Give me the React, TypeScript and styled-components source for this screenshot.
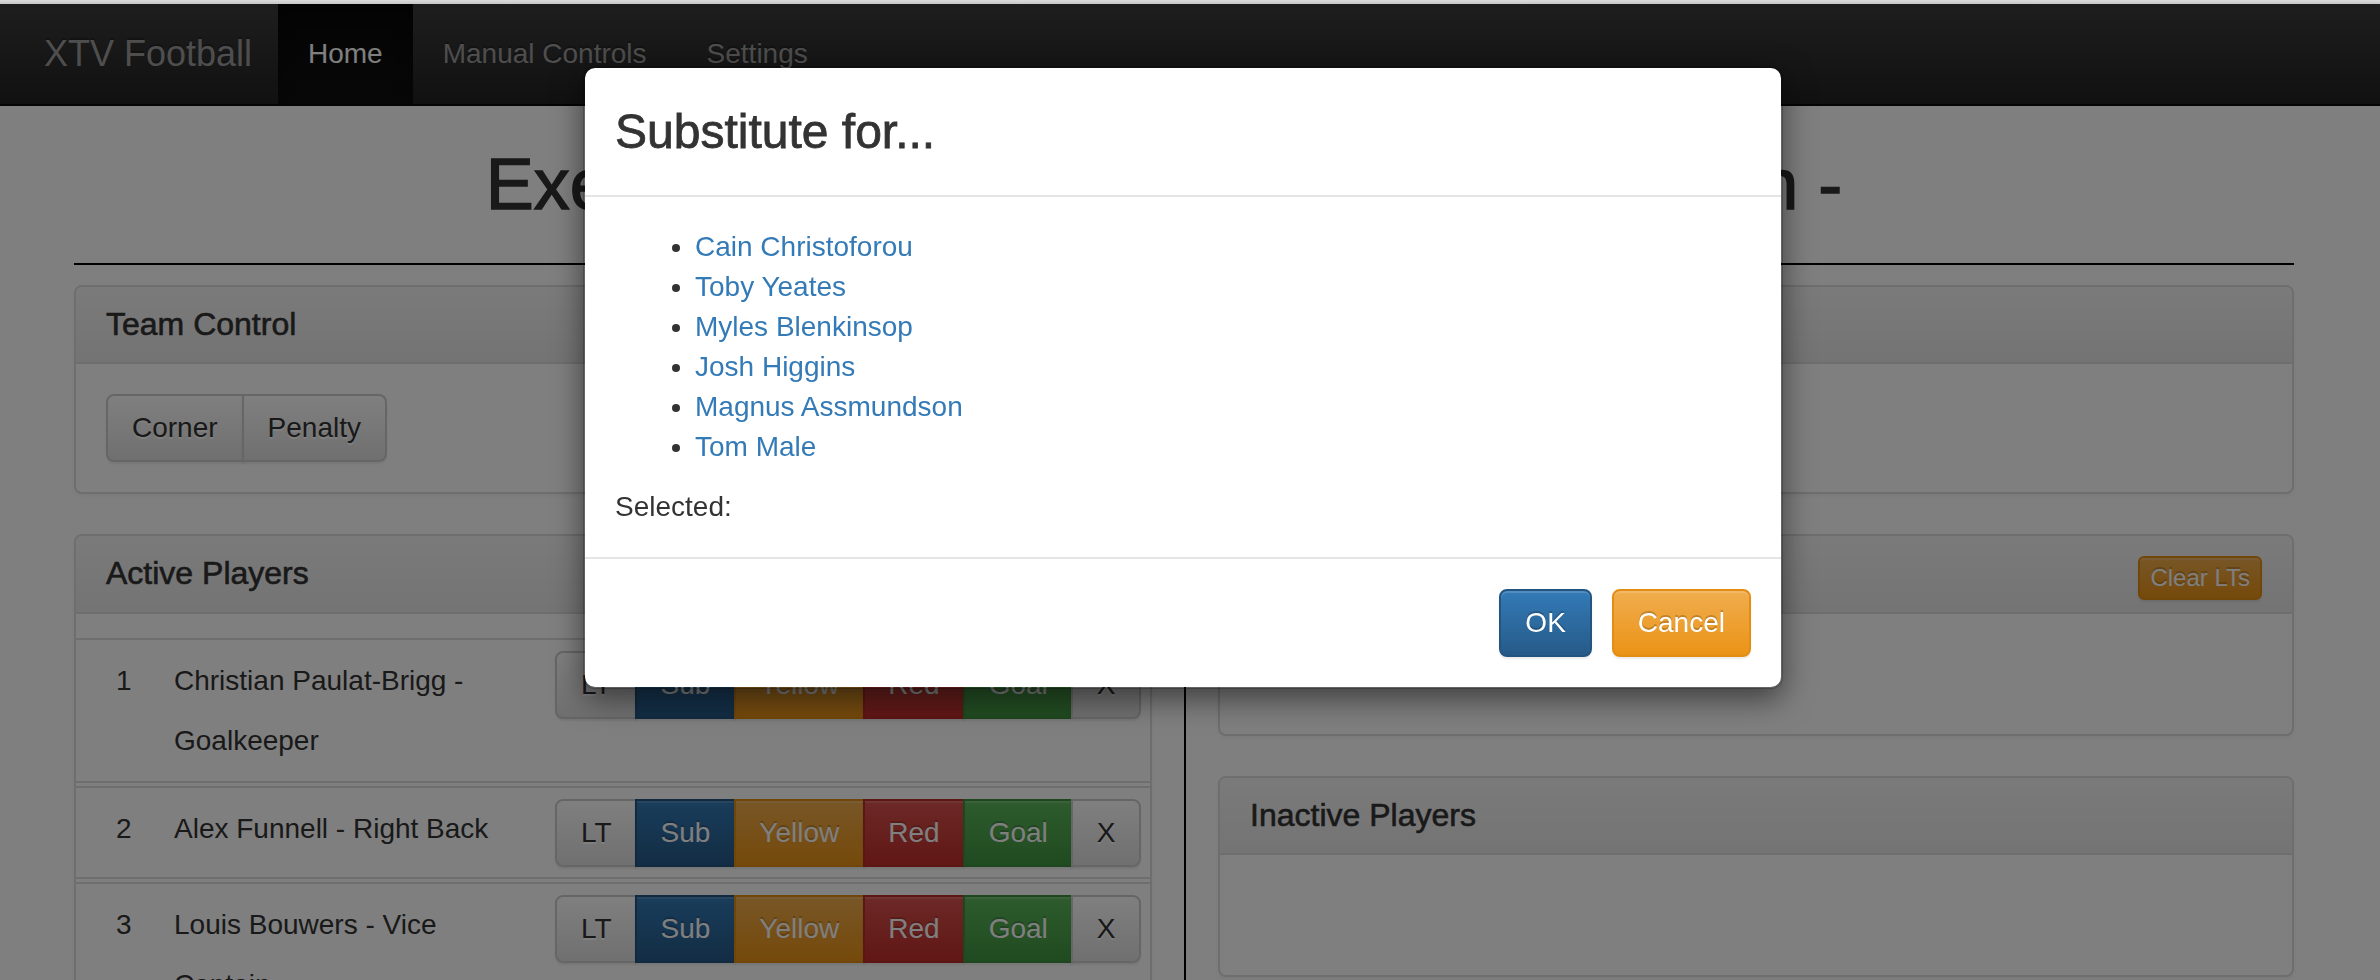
import React from "react";
import styled, { createGlobalStyle, css } from "styled-components";

const GlobalStyle = createGlobalStyle`
  html, body { margin: 0; padding: 0; overflow: hidden; background: #fff; }
  body {
    font-family: "Liberation Sans", Arial, Helvetica, sans-serif;
    font-size: 28px;
    line-height: 40px;
    color: #333;
  }
  * { box-sizing: border-box; }
`;

type Variant = "default" | "primary" | "success" | "warning" | "danger";

const variants: Record<Variant, { from: string; to: string; border: string; color: string; shadow: string }> = {
  default: { from: "#ffffff", to: "#e0e0e0", border: "#cccccc", color: "#333", shadow: "0 2px 0 #fff" },
  primary: { from: "#337ab7", to: "#265a88", border: "#245580", color: "#fff", shadow: "0 -2px 0 rgba(0,0,0,.2)" },
  success: { from: "#5cb85c", to: "#419641", border: "#3e8f3e", color: "#fff", shadow: "0 -2px 0 rgba(0,0,0,.2)" },
  warning: { from: "#f0ad4e", to: "#eb9316", border: "#e38d13", color: "#fff", shadow: "0 -2px 0 rgba(0,0,0,.2)" },
  danger: { from: "#d9534f", to: "#c12e2a", border: "#b92c28", color: "#fff", shadow: "0 -2px 0 rgba(0,0,0,.2)" },
};

const TopBand = styled.div`
  height: 4px;
  background: linear-gradient(to bottom, #dcdcdc, #c6c6c6);
`;

const Navbar = styled.nav`
  display: flex;
  align-items: stretch;
  height: 102px;
  background: linear-gradient(to bottom, #3c3c3c 0%, #222 100%);
  border-bottom: 2px solid #080808;
`;

const Brand = styled.a`
  display: flex;
  align-items: center;
  width: 278px;
  padding-left: 44px;
  font-size: 36px;
  color: #9d9d9d;
  text-shadow: 0 -2px 0 rgba(0, 0, 0, 0.25);
`;

const NavList = styled.div`
  display: flex;
  align-items: stretch;
`;

const NavLink = styled.a<{ $active?: boolean }>`
  display: flex;
  align-items: center;
  padding: 0 30px;
  font-size: 28px;
  color: ${(p) => (p.$active ? "#fff" : "#9d9d9d")};
  text-shadow: 0 -2px 0 rgba(0, 0, 0, 0.25);
  ${(p) =>
    p.$active &&
    css`
      background: linear-gradient(to bottom, #080808 0%, #0f0f0f 100%);
      box-shadow: inset 0 6px 18px rgba(0, 0, 0, 0.25);
    `}
`;

const Page = styled.main`
  padding: 0 86px 0 74px;
`;

const Title = styled.h1`
  margin: 39px 0 0;
  padding-right: 40px;
  text-align: center;
  font-size: 72px;
  line-height: 1.1;
  font-weight: 500;
  color: #333;
  white-space: nowrap;
  -webkit-text-stroke: 1.4px #333;
`;

const Rule = styled.hr`
  margin: 39px 0 20px;
  border: 0;
  border-top: 2px solid #000;
  height: 0;
`;

const Panel = styled.section`
  margin-bottom: 40px;
  background: #fff;
  border: 2px solid #ddd;
  border-radius: 8px;
  box-shadow: 0 2px 4px rgba(0, 0, 0, 0.05);
`;

const PanelHeading = styled.header`
  display: flex;
  justify-content: space-between;
  align-items: flex-start;
  padding: 20px 30px;
  background: linear-gradient(to bottom, #f5f5f5 0%, #e8e8e8 100%);
  border-bottom: 2px solid #ddd;
  border-radius: 6px 6px 0 0;
`;

const PanelTitle = styled.h3`
  margin: 0;
  font-size: 32px;
  line-height: 1.1;
  font-weight: 500;
  color: #333;
  -webkit-text-stroke: 0.6px #333;
`;

const PanelBody = styled.div<{ $minContent?: number }>`
  padding: 30px;
  min-height: ${(p) => (p.$minContent ? `${p.$minContent + 60}px` : "auto")};
`;

const BtnGroup = styled.div`
  display: inline-flex;
  & > *:not(:first-child) {
    margin-left: -2px;
    border-top-left-radius: 0;
    border-bottom-left-radius: 0;
  }
  & > *:not(:last-child) {
    border-top-right-radius: 0;
    border-bottom-right-radius: 0;
  }
`;

const Btn = styled.button<{ $variant?: Variant }>`
  ${(p) => {
    const v = variants[p.$variant ?? "default"];
    return css`
      background: linear-gradient(to bottom, ${v.from} 0%, ${v.to} 100%);
      border: 2px solid ${v.border};
      color: ${v.color};
      text-shadow: ${v.shadow};
    `;
  }}
  font-family: inherit;
  font-size: 28px;
  line-height: 40px;
  padding: 12px 24px;
  border-radius: 8px;
  box-shadow: inset 0 2px 0 rgba(255, 255, 255, 0.15), 0 2px 2px rgba(0, 0, 0, 0.075);
  cursor: pointer;
  white-space: nowrap;
`;

const ActionBtn = styled(Btn)`
  padding: 12px 23.5px;
`;

const XsBtn = styled(Btn)`
  font-size: 24px;
  line-height: 36px;
  padding: 2px 10px;
  border-radius: 6px;
  margin-bottom: -9px;
`;

const Columns = styled.div`
  display: grid;
  grid-template-columns: 1fr 1fr;
`;

const LeftCol = styled.div`
  padding-right: 32px;
`;

const RightCol = styled.div`
  padding-left: 32px;
  border-left: 2px solid #000;
`;

const PlayerTable = styled.div`
  padding-top: 24px;
`;

const PlayerRow = styled.div`
  display: grid;
  grid-template-columns: 98px 1fr auto;
  align-items: start;
  padding: 11px 9px 10px 0;
  border-top: 2px solid #ddd;
  border-bottom: 2px solid #ddd;
  & + & {
    margin-top: 3px;
  }
`;

const PlayerNum = styled.div`
  padding-left: 40px;
  line-height: 60px;
`;

const PlayerName = styled.div`
  max-width: 360px;
  padding-right: 10px;
  line-height: 60px;
`;

const PlayerActions = styled.div`
  padding-left: 10px;
`;

const Backdrop = styled.div`
  position: fixed;
  top: 4px;
  left: 0;
  right: 0;
  bottom: 0;
  background: rgba(0, 0, 0, 0.5);
  z-index: 1040;
`;

const ModalLayer = styled.div`
  position: fixed;
  inset: 0;
  z-index: 1050;
  padding-right: 14px;
`;

const ModalDialog = styled.div`
  width: 1200px;
  margin: 66px auto 0;
  background: #fff;
  border: 2px solid rgba(0, 0, 0, 0.2);
  border-radius: 12px;
  box-shadow: 0 10px 30px rgba(0, 0, 0, 0.5);
  background-clip: padding-box;
`;

const ModalHeader = styled.div`
  padding: 30px;
  border-bottom: 2px solid #e5e5e5;
`;

const ModalTitle = styled.h3`
  margin: 0;
  font-size: 48px;
  line-height: 67px;
  font-weight: 500;
  color: #333;
  -webkit-text-stroke: 0.8px #333;
`;

const ModalBody = styled.div`
  padding: 30px;
`;

const SubList = styled.ul`
  margin: 0 0 20px;
  padding-left: 80px;
  list-style: disc;
`;

const SubLink = styled.a`
  color: #337ab7;
  text-decoration: none;
`;

const Selected = styled.p`
  margin: 0;
`;

const ModalFooter = styled.div`
  display: flex;
  justify-content: flex-end;
  gap: 20px;
  padding: 30px;
  border-top: 2px solid #e5e5e5;
`;

const players = [
  { n: 1, name: "Christian Paulat-Brigg - Goalkeeper" },
  { n: 2, name: "Alex Funnell - Right Back" },
  { n: 3, name: "Louis Bouwers - Vice Captain" },
];

const subs = [
  "Cain Christoforou",
  "Toby Yeates",
  "Myles Blenkinsop",
  "Josh Higgins",
  "Magnus Assmundson",
  "Tom Male",
];

const actions: { label: string; variant: Variant }[] = [
  { label: "LT", variant: "default" },
  { label: "Sub", variant: "primary" },
  { label: "Yellow", variant: "warning" },
  { label: "Red", variant: "danger" },
  { label: "Goal", variant: "success" },
  { label: "X", variant: "default" },
];

export default function App() {
  return (
    <>
      <GlobalStyle />
      <TopBand />
      <Navbar>
        <Brand>XTV Football</Brand>
        <NavList>
          <NavLink $active>Home</NavLink>
          <NavLink>Manual Controls</NavLink>
          <NavLink>Settings</NavLink>
        </NavList>
      </Navbar>
      <Page>
        <Title>Exeter University 2nd XI vs Southampton -</Title>
        <Rule />
        <Panel>
          <PanelHeading>
            <PanelTitle>Team Control</PanelTitle>
          </PanelHeading>
          <PanelBody>
            <BtnGroup>
              <Btn>Corner</Btn>
              <Btn>Penalty</Btn>
            </BtnGroup>
          </PanelBody>
        </Panel>
        <Columns>
          <LeftCol>
            <Panel>
              <PanelHeading>
                <PanelTitle>Active Players</PanelTitle>
              </PanelHeading>
              <PlayerTable>
                {players.map((p) => (
                  <PlayerRow key={p.n}>
                    <PlayerNum>{p.n}</PlayerNum>
                    <PlayerName>{p.name}</PlayerName>
                    <PlayerActions>
                      <BtnGroup>
                        {actions.map((a) => (
                          <ActionBtn key={a.label} $variant={a.variant}>
                            {a.label}
                          </ActionBtn>
                        ))}
                      </BtnGroup>
                    </PlayerActions>
                  </PlayerRow>
                ))}
              </PlayerTable>
            </Panel>
          </LeftCol>
          <RightCol>
            <Panel>
              <PanelHeading>
                <PanelTitle>Lower Thirds</PanelTitle>
                <XsBtn $variant="warning">Clear LTs</XsBtn>
              </PanelHeading>
              <PanelBody $minContent={60} />
            </Panel>
            <Panel>
              <PanelHeading>
                <PanelTitle>Inactive Players</PanelTitle>
              </PanelHeading>
              <PanelBody $minContent={60} />
            </Panel>
          </RightCol>
        </Columns>
      </Page>
      <Backdrop />
      <ModalLayer>
        <ModalDialog>
          <ModalHeader>
            <ModalTitle>Substitute for...</ModalTitle>
          </ModalHeader>
          <ModalBody>
            <SubList>
              {subs.map((s) => (
                <li key={s}>
                  <SubLink href="#">{s}</SubLink>
                </li>
              ))}
            </SubList>
            <Selected>Selected:</Selected>
          </ModalBody>
          <ModalFooter>
            <Btn $variant="primary">OK</Btn>
            <Btn $variant="warning">Cancel</Btn>
          </ModalFooter>
        </ModalDialog>
      </ModalLayer>
    </>
  );
}
